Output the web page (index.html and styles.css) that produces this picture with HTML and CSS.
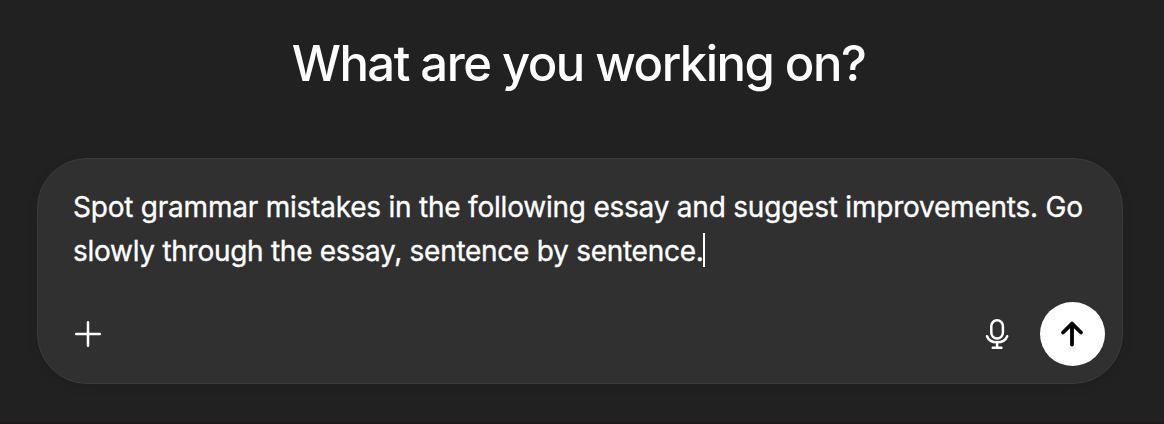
FILE: index.html
```html
<!DOCTYPE html>
<html lang="en">
<head>
<meta charset="utf-8">
<title>Chat</title>
<link rel="stylesheet" href="styles.css">
</head>
<body>
<main class="page">
  <h1 class="title">What are you working on?</h1>
  <form class="composer">
    <div class="prompt">
      <div class="line line-one">Spot grammar mistakes in the following essay and suggest improvements. Go</div>
      <div class="line line-two">slowly through the essay, sentence by sentence.<span class="caret"></span></div>
    </div>
    <div class="toolbar">
      <button class="icon-button" type="button" aria-label="Add">
        <svg width="30" height="28" viewBox="0 0 30 28"><path d="M15 2.200v23.600M3.200 14h23.600"/></svg>
      </button>
      <div class="actions">
        <button class="icon-button" type="button" aria-label="Dictate">
          <svg width="26" height="34" viewBox="0 0 26 34"><rect x="7.300" y="3.300" width="11.600" height="18.200" rx="5.800"/><path d="M3 19.200a10.600 8.800 0 0 0 20.200 0M13.100 25v5.700M8.800 30.700h8.600"/></svg>
        </button>
        <button class="send" type="button" aria-label="Send">
          <svg width="29" height="30" viewBox="0 0 29 30"><path d="M14 25.500V4.500M5 13.500L14 4.700l9 8.800"/></svg>
        </button>
      </div>
    </div>
  </form>
</main>
</body>
</html>
```

FILE: styles.css
```css
* { box-sizing: border-box; }
body {
  margin: 0;
  background: #212121;
  color: #fff;
  font-family: Inter, "Liberation Sans", sans-serif;
}
.page {
  height: 424px;
  padding: 34px 41px 0 37px;
  border-bottom: 2px solid #1e1a1c;
}
.title {
  margin: 0 0 64px;
  padding-right: 3px;
  height: 60px;
  line-height: 60px;
  font-size: 49px;
  font-weight: 500;
  letter-spacing: -1.52px;
  text-align: center;
  white-space: nowrap;
}
.composer {
  display: flex;
  flex-direction: column;
  justify-content: space-between;
  height: 226px;
  padding: 26px 17px 17px 35px;
  background: #303030;
  border: 1px solid #3b3b3b;
  border-radius: 50px;
  box-shadow: 0 4px 12px rgba(0, 0, 0, .08);
}
.line {
  height: 44px;
  line-height: 44px;
  font-size: 28px;
  font-weight: 400;
  letter-spacing: -0.22px;
  -webkit-text-stroke: 0.35px #fff;
  white-space: nowrap;
}
.line-two { letter-spacing: -0.27px; }
.caret {
  display: inline-block;
  width: 2px;
  height: 34px;
  margin-left: -1px;
  vertical-align: -6px;
  background: #fff;
}
.toolbar, .actions { display: flex; align-items: center; }
.toolbar { justify-content: space-between; }
.actions { gap: 30px; }
button { display: grid; place-items: center; padding: 0; border: 0; background: none; }
svg { fill: none; stroke: #fff; stroke-width: 2.5; stroke-linecap: round; stroke-linejoin: round; }
.send { width: 65px; height: 64px; border-radius: 50%; background: #fff; }
.send svg { stroke: #000; stroke-width: 3.8; }
```
